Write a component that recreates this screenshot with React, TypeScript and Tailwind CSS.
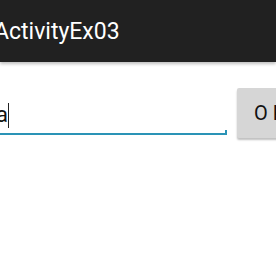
export default function App() {
  return (
    <div className="w-[276px] h-[260px] overflow-hidden bg-white" style={{ fontFamily: 'Roboto, "Noto Sans", sans-serif' }}>
      <div className="h-[62px] bg-[#212121] flex items-center shadow-[0_2px_3px_rgba(0,0,0,0.25)] relative z-10">
        <h1 className="-ml-[6px] pt-[1px] text-[23px] leading-none text-white">ActivityEx03</h1>
      </div>
      <div className="flex items-start mt-[26px]">
        <div className="w-[231px] h-[48px] relative flex items-center -ml-[4px] shrink-0">
          <span className="text-[22px] text-[#111] leading-none pt-[6px]">a</span>
          <span className="w-[1.5px] h-[25px] bg-[#222] mt-[6px]" />
          <div className="absolute left-0 right-0 bottom-[1px] h-[2px] bg-[#2a93b6]" />
          <div className="absolute right-0 bottom-[1px] w-[2px] h-[5px] bg-[#2a93b6]" />
        </div>
        <button className="ml-[10px] h-[50px] w-[70px] shrink-0 bg-[#d6d6d6] rounded-[2px] shadow-[0_2px_2px_rgba(0,0,0,0.25)] text-[20px] text-[#111] text-left pl-[17px] tracking-[5px]">
          OK
        </button>
      </div>
    </div>
  );
}
